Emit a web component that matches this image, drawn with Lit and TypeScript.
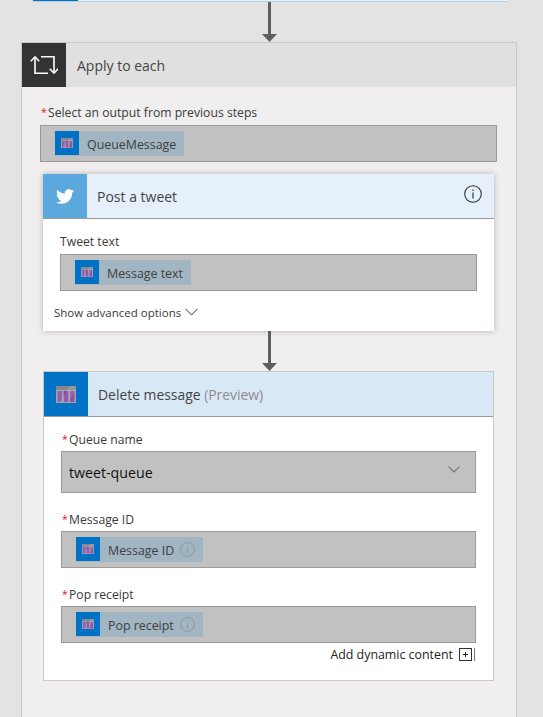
import { LitElement, html, css, svg } from 'lit';
import { customElement } from 'lit/decorators.js';

const tableIcon = (w: number, h: number) => html`
  <svg width=${w} height=${h} viewBox="0 0 20 17">
    <rect width="20" height="17" fill="#a8a4ac"></rect>
    <rect width="20" height="4" fill="#85898b"></rect>
    <rect x="1.5" y="5" width="4.6" height="11" fill="#9560ac"></rect>
    <rect x="7.7" y="5" width="4.6" height="11" fill="#84429f"></rect>
    <rect x="13.9" y="5" width="4.6" height="11" fill="#8f52a6"></rect>
    <path d="M3 16L14 0H20V4L12 16Z" fill="#fff" opacity="0.12"></path>
  </svg>
`;

const infoIcon = (size: number, color: string) => html`
  <svg width=${size} height=${size} viewBox="0 0 18 18" fill="none" stroke=${color}>
    <circle cx="9" cy="9" r="8.3" stroke-width=${size > 16 ? 1.1 : 1.2}></circle>
    <path d="M9 7.6V13.4" stroke-width="1.2"></path>
    <path d="M9 4.6V6" stroke-width="1.2"></path>
  </svg>
`;

const arrow = svg`
  <path d="M7.5 0V34" stroke="#5f5f5f" stroke-width="3"></path>
  <path d="M0 32H15L7.5 40Z" fill="#5f5f5f"></path>
`;

@customElement('app-root')
export class AppRoot extends LitElement {
  static styles = css`
    :host {
      display: block;
      height: 717px;
      overflow: hidden;
      background: #e3e3e3;
      font-family: 'Open Sans', 'Liberation Sans', sans-serif;
      font-size: 12.2px;
      color: #3a3a3a;
    }

    .flow {
      width: 496px;
      margin-left: 21px;
    }

    .top-strip {
      display: flex;
      height: 2px;
      margin: 0 10px 0 12px;
      background: #e5f0fa;
      border-bottom: 1px solid #b9d0e2;
      box-sizing: border-box;
    }

    .top-strip_icon {
      width: 45px;
      background: #0072c6;
    }

    .arrow {
      display: flex;
      justify-content: center;
      height: 40px;
    }

    .loop {
      border: 1px solid #c8c8c8;
      background: #f0eeef;
      height: 700px;
    }

    .header {
      display: flex;
      align-items: center;
      height: 44px;
      font-size: 14px;
      color: #444;
    }

    .header_icon {
      display: flex;
      align-items: center;
      justify-content: center;
      width: 44px;
      height: 44px;
      flex: none;
      margin-right: 10px;
    }

    .header_info {
      display: flex;
      margin-left: auto;
      margin-right: 12px;
      margin-top: -4px;
    }

    .delete_title {
      font-size: 13.9px;
    }

    .muted {
      color: #8c8c8c;
    }

    .loop_header {
      background: #e0e0e0;
    }

    .loop_icon {
      background: #333;
      margin-right: 11px;
    }

    .loop_body {
      padding: 16px 19px 0 18px;
    }

    .label {
      display: flex;
      align-items: center;
      height: 18px;
      margin-bottom: 3px;
      white-space: nowrap;
    }

    .loop_body > .label {
      margin-bottom: 4px;
    }

    .star {
      width: 8px;
      color: #e81123;
      font-size: 10.5px;
      padding-left: 1px;
      box-sizing: border-box;
    }

    .input {
      display: flex;
      align-items: center;
      height: 37px;
      padding-left: 14px;
      box-sizing: border-box;
      background: #c1c1c1;
      border: 1px solid #999;
    }

    .input_select {
      height: 42px;
      padding: 1px 15px 0 7px;
      justify-content: space-between;
      font-size: 14.2px;
      color: #111;
    }

    .input_select svg {
      margin-top: -7px;
    }

    .token {
      display: flex;
      align-items: center;
      height: 25px;
      background: #a2b5c2;
      color: #3f3f3f;
      font-size: 12.4px;
      white-space: nowrap;
    }

    .token_icon {
      display: flex;
      align-items: center;
      justify-content: center;
      width: 24px;
      height: 24px;
      margin-right: 8px;
      margin-top: -1px;
      background: #0072c6;
    }

    .token_text {
      padding-top: 1px;
    }

    .token_info {
      display: flex;
      margin-left: 6px;
    }

    .token_end {
      width: 8px;
    }

    .card {
      background: #fff;
      margin-left: 21px;
      margin-right: 22px;
    }

    .tweet {
      margin-top: 12px;
      box-shadow: 0 0 6px rgba(0, 0, 0, 0.25);
    }

    .tweet_header {
      background: #e5f0fa;
      border-bottom: 1px solid #999;
    }

    .tweet_icon {
      background: #5ba8dc;
    }

    .tweet_body {
      padding: 13px 17px 10px;
    }

    .tweet_body > .label {
      margin-bottom: 4px;
    }

    .advanced {
      display: flex;
      align-items: center;
      gap: 4px;
      height: 18px;
      margin: 12px 0 0 -6px;
      font-size: 11.5px;
    }

    .delete {
      border: 1px solid #c8c8c8;
    }

    .delete_header {
      background: #d9e8f5;
      border-bottom: 1px solid #999;
    }

    .delete_icon {
      background: #0072c6;
    }

    .delete_body {
      padding: 13px 17px 17px;
    }

    .field {
      margin-bottom: 17px;
    }

    .field_last {
      margin-bottom: 0;
    }

    .dynamic {
      display: flex;
      justify-content: flex-end;
      align-items: center;
      gap: 6px;
      height: 18px;
      margin-top: 2px;
      padding-right: 1px;
      font-size: 12.4px;
      color: #222;
    }

    svg {
      display: block;
    }
  `;

  renderToken(text: string, info = false) {
    return html`
      <div class="token">
        <span class="token_icon">${tableIcon(12, 10)}</span>
        <span class="token_text">${text}</span>
        ${info ? html`<span class="token_info">${infoIcon(15, '#8d979f')}</span>` : ''}
        <span class="token_end"></span>
      </div>
    `;
  }

  renderField(label: string, token: string, last = false) {
    return html`
      <div class="field ${last ? 'field_last' : ''}">
        <div class="label"><span class="star">*</span>${label}</div>
        <div class="input">${this.renderToken(token, true)}</div>
      </div>
    `;
  }

  render() {
    return html`
      <div class="flow">
        <div class="top-strip"><div class="top-strip_icon"></div></div>
        <div class="arrow"><svg width="15" height="40" viewBox="0 0 15 40">${arrow}</svg></div>

        <div class="loop">
          <div class="header loop_header">
            <div class="header_icon loop_icon">
              <svg width="28" height="20" viewBox="0 0 28 20" fill="none" stroke="#fff" stroke-width="1.6">
                <path d="M5 3V18.3H18"></path>
                <path d="M0.8 6.2L5 1.8L9.2 6.2"></path>
                <path d="M11 1.7H24V17"></path>
                <path d="M19.8 13.8L24 18.2L28 13.8"></path>
              </svg>
            </div>
            Apply to each
          </div>

          <div class="loop_body">
            <div class="label"><span class="star">*</span>Select an output from previous steps</div>
            <div class="input">${this.renderToken('QueueMessage')}</div>
          </div>

          <div class="card tweet">
            <div class="header tweet_header">
              <div class="header_icon tweet_icon">
                <svg width="18" height="15" viewBox="0 0 24 20" fill="#fff">
                  <path d="M23.95 2.57a10 10 0 0 1-2.82.78 4.96 4.96 0 0 0 2.16-2.73c-.95.56-2 .96-3.13 1.19a4.92 4.92 0 0 0-8.38 4.48C7.69 6.1 4.07 4.13 1.64 1.16a4.82 4.82 0 0 0-.67 2.48c0 1.71.87 3.21 2.19 4.1a4.9 4.9 0 0 1-2.23-.62v.06a4.92 4.92 0 0 0 3.95 4.83 5 5 0 0 1-2.21.08 4.94 4.94 0 0 0 4.6 3.42 9.87 9.87 0 0 1-6.1 2.1c-.39 0-.78-.02-1.17-.06a14 14 0 0 0 7.56 2.2c9.05 0 14-7.49 14-13.98 0-.21 0-.42-.02-.63A9.94 9.94 0 0 0 24 2.59z"></path>
                </svg>
              </div>
              Post a tweet
              <span class="header_info">${infoIcon(18, '#333')}</span>
            </div>
            <div class="tweet_body">
              <div class="label">Tweet text</div>
              <div class="input">${this.renderToken('Message text')}</div>
              <div class="advanced">
                Show advanced options
                <svg width="13" height="8" viewBox="0 0 13 8" fill="none" stroke="#333">
                  <path d="M0.5 0.8L6.5 7L12.5 0.8"></path>
                </svg>
              </div>
            </div>
          </div>

          <div class="arrow"><svg width="15" height="40" viewBox="0 0 15 40">${arrow}</svg></div>

          <div class="card delete">
            <div class="header delete_header">
              <div class="header_icon delete_icon">${tableIcon(20, 17)}</div>
              <span class="delete_title">Delete message&nbsp;<span class="muted">(Preview)</span></span>
            </div>
            <div class="delete_body">
              <div class="field">
                <div class="label"><span class="star">*</span>Queue name</div>
                <div class="input input_select">
                  tweet-queue
                  <svg width="12" height="7" viewBox="0 0 12 7" fill="none" stroke="#777" stroke-width="1.1">
                    <path d="M0.5 0.7L6 6L11.5 0.7"></path>
                  </svg>
                </div>
              </div>
              ${this.renderField('Message ID', 'Message ID')}
              ${this.renderField('Pop receipt', 'Pop receipt', true)}
              <div class="dynamic">
                Add dynamic content
                <svg width="16" height="13" viewBox="0 0 16 13" fill="none" stroke="#333">
                  <rect x="0.5" y="0.5" width="12" height="12"></rect>
                  <path d="M15.5 0V13" stroke="#777"></path>
                  <path d="M6.5 4V9M4 6.5H9" stroke="#222"></path>
                </svg>
              </div>
            </div>
          </div>
        </div>
      </div>
    `;
  }
}
